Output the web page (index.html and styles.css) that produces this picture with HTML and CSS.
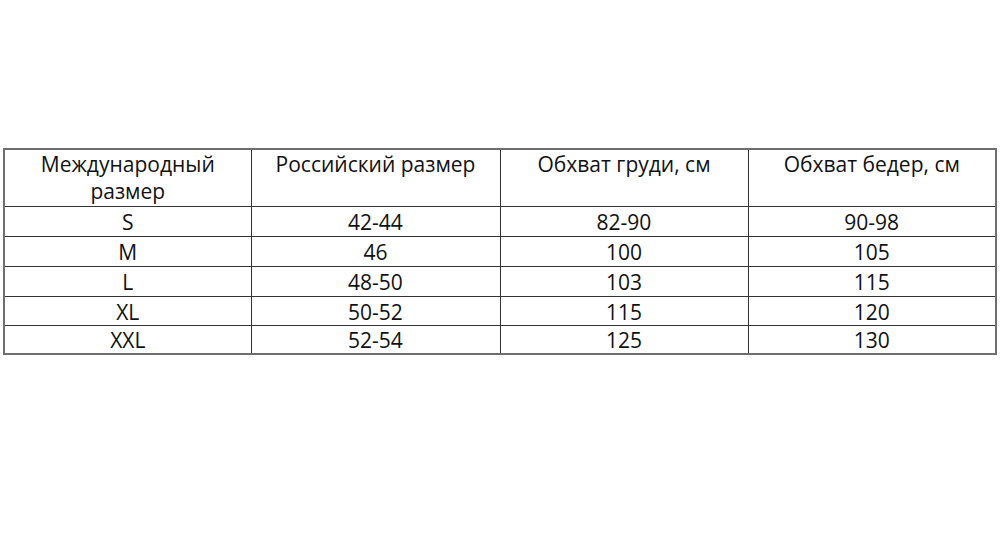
FILE: index.html
```html
<!DOCTYPE html>
<html lang="ru">
<head>
<meta charset="utf-8">
<title>Таблица размеров</title>
<link rel="stylesheet" href="styles.css">
</head>
<body>
<table class="sizes">
  <colgroup>
    <col class="c1"><col class="c2"><col class="c3"><col class="c4">
  </colgroup>
  <thead>
    <tr class="head">
      <th>Международный размер</th>
      <th>Российский размер</th>
      <th>Обхват груди, см</th>
      <th>Обхват бедер, см</th>
    </tr>
  </thead>
  <tbody>
    <tr class="r30"><td>S</td><td>42-44</td><td>82-90</td><td>90-98</td></tr>
    <tr class="r30"><td>M</td><td>46</td><td>100</td><td>105</td></tr>
    <tr class="r30"><td>L</td><td>48-50</td><td>103</td><td>115</td></tr>
    <tr class="r29"><td>XL</td><td>50-52</td><td>115</td><td>120</td></tr>
    <tr class="r29"><td>XXL</td><td>52-54</td><td>125</td><td>130</td></tr>
  </tbody>
</table>
</body>
</html>
```
FILE: styles.css
```css
html, body {
  margin: 0;
  padding: 0;
  background: #ffffff;
}
body {
  padding: 148px 0 0 3px;
  font-family: "Open Sans", "Liberation Sans", sans-serif;
  color: #111111;
}
.sizes {
  border-collapse: collapse;
  table-layout: fixed;
  width: 992px;
  border: 2px solid #6e6e6e;
}
.c1 { width: 247px; }
.c2 { width: 249px; }
.c3 { width: 248px; }
.c4 { width: 248px; }
.sizes th, .sizes td {
  border: 1px solid #333333;
  text-align: center;
  padding: 0 6px;
  font-size: 21px;
  font-weight: normal;
}
.sizes th {
  vertical-align: top;
  line-height: 27px;
  padding-top: 1px;
  height: 57px;
  box-sizing: border-box;
}
.sizes td {
  vertical-align: middle;
  line-height: 22px;
  padding-top: 2px;
}
.r30 td { height: 30px; box-sizing: border-box; }
.r29 td { height: 29px; box-sizing: border-box; }
.r30 { height: 30px; }
.r29 { height: 29px; }
```
